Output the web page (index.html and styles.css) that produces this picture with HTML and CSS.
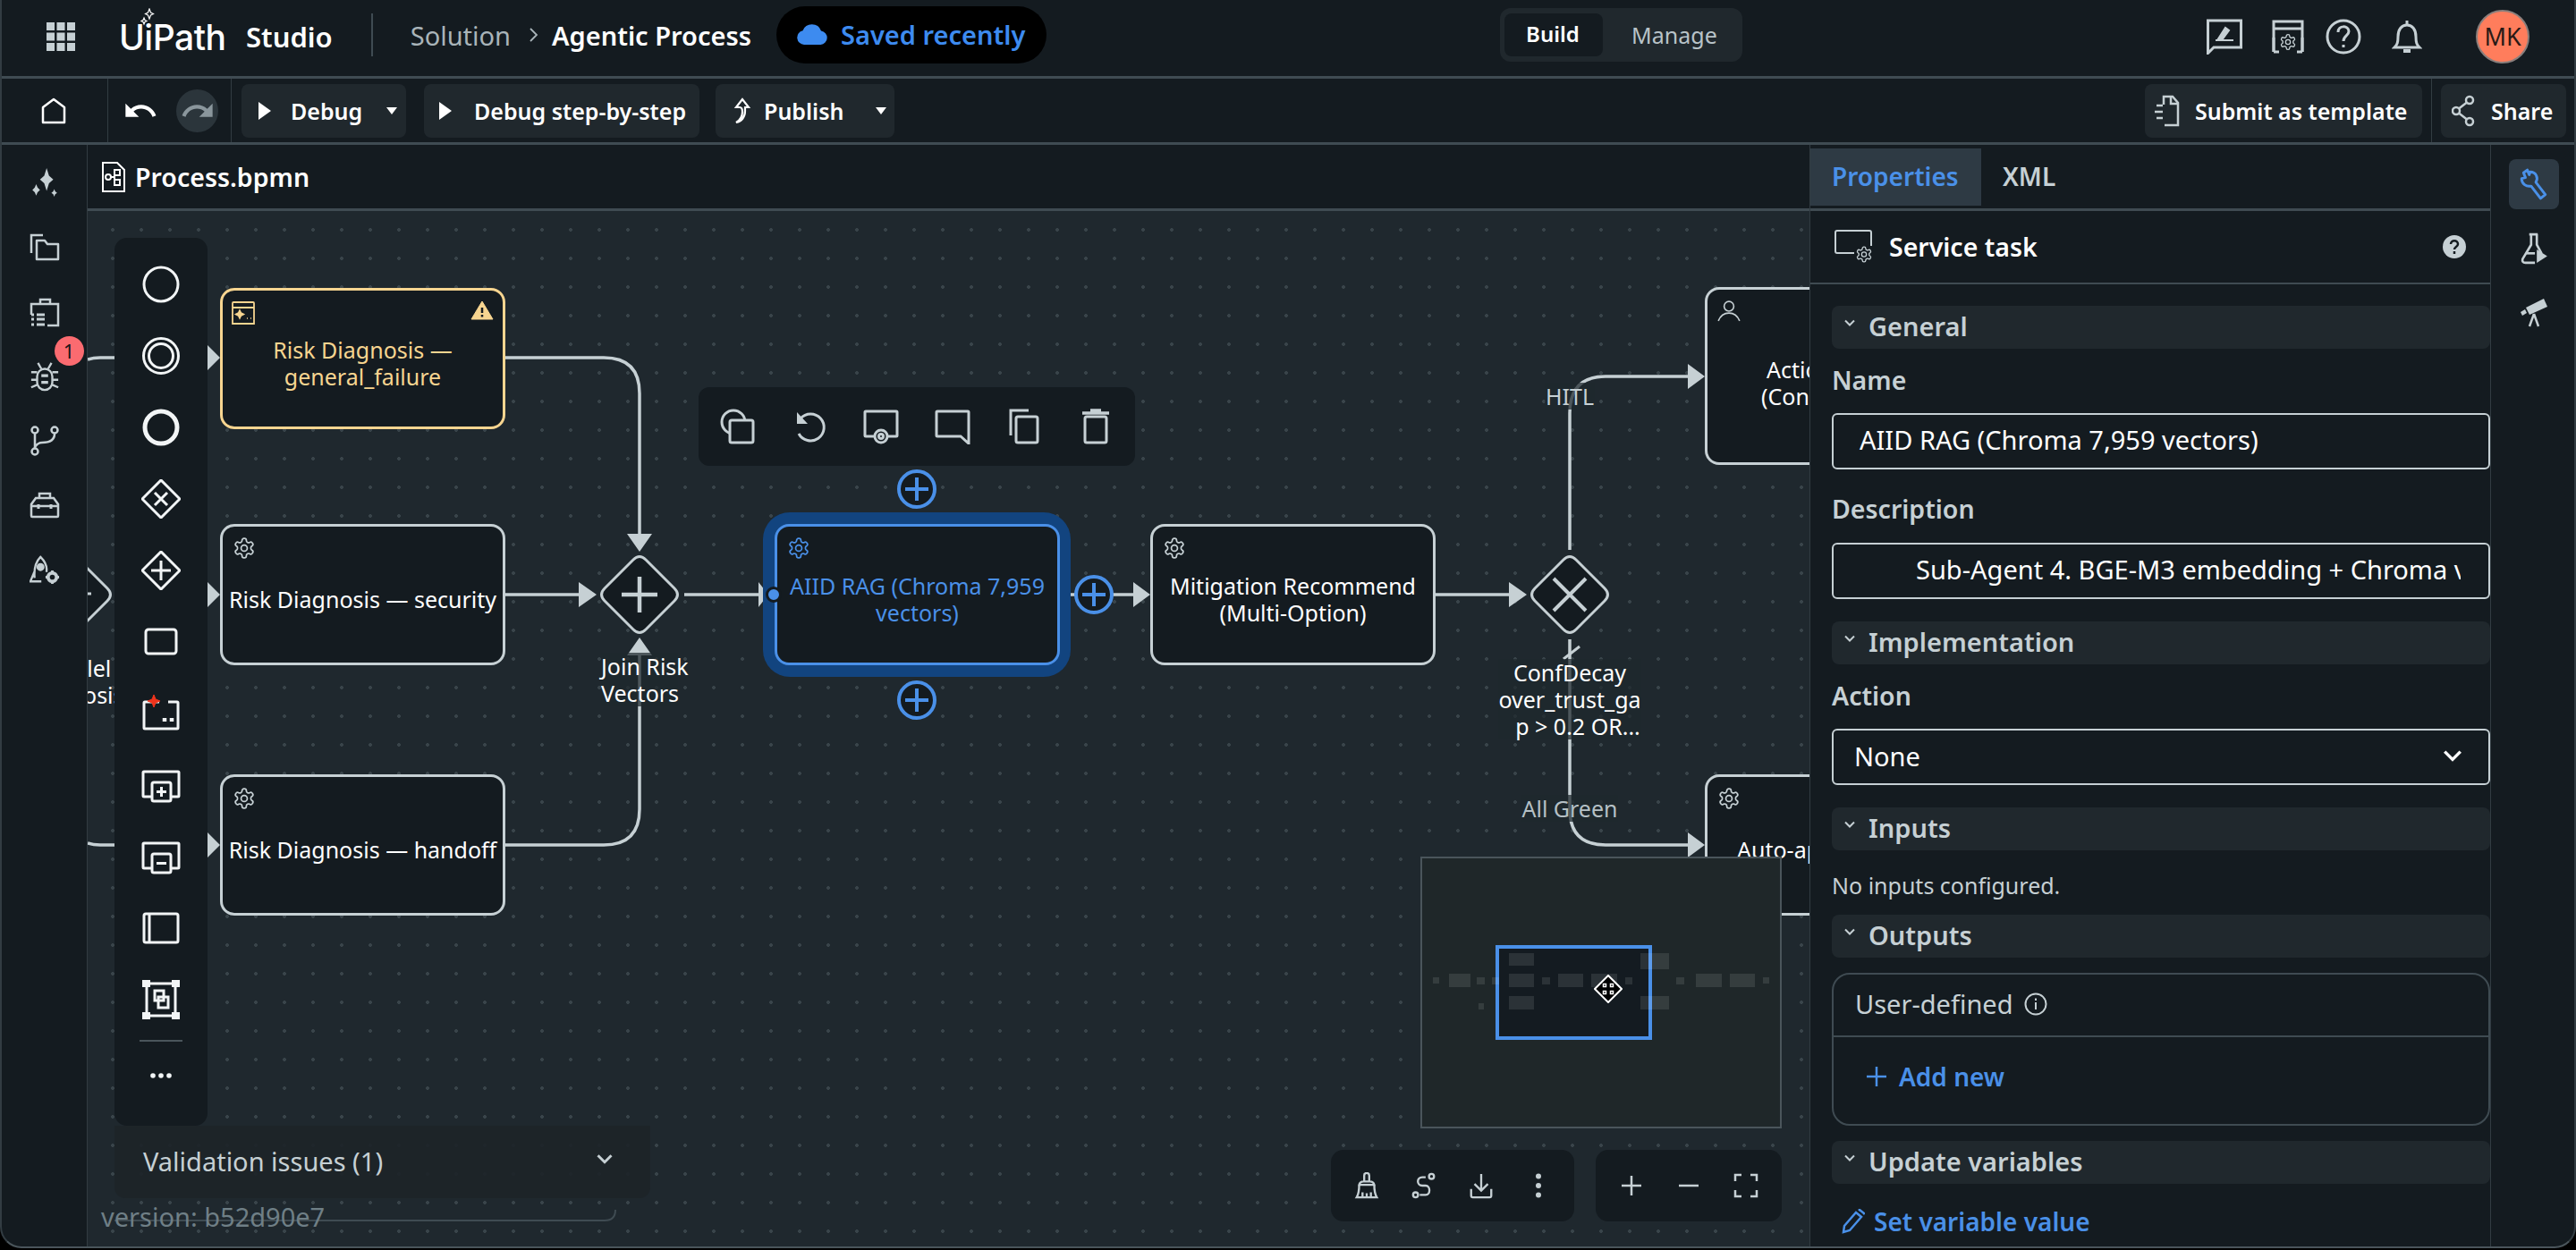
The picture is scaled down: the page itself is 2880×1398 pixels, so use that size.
FILE: index.html
```html
<!DOCTYPE html>
<html lang="en">
<head>
    <meta charset="UTF-8">
    <title>UiPath Studio - Agentic Process</title>
    <link rel="stylesheet" href="styles.css">
</head>
<body>
<svg class="defs">
    <symbol id="gear" viewBox="0 0 24 24"><path fill="none" stroke="currentColor" stroke-width="1.6" d="M12.22 2h-.44a2 2 0 0 0-2 2v.18a2 2 0 0 1-1 1.73l-.43.25a2 2 0 0 1-2 0l-.15-.08a2 2 0 0 0-2.73.73l-.22.38a2 2 0 0 0 .73 2.73l.15.1a2 2 0 0 1 1 1.72v.51a2 2 0 0 1-1 1.74l-.15.09a2 2 0 0 0-.73 2.73l.22.38a2 2 0 0 0 2.73.73l.15-.08a2 2 0 0 1 2 0l.43.25a2 2 0 0 1 1 1.73V20a2 2 0 0 0 2 2h.44a2 2 0 0 0 2-2v-.18a2 2 0 0 1 1-1.73l.43-.25a2 2 0 0 1 2 0l.15.08a2 2 0 0 0 2.73-.73l.22-.39a2 2 0 0 0-.73-2.73l-.15-.08a2 2 0 0 1-1-1.74v-.5a2 2 0 0 1 1-1.74l.15-.09a2 2 0 0 0 .73-2.73l-.22-.38a2 2 0 0 0-2.73-.73l-.15.08a2 2 0 0 1-2 0l-.43-.25a2 2 0 0 1-1-1.73V4a2 2 0 0 0-2-2z"/><circle cx="12" cy="12" r="3.2" fill="none" stroke="currentColor" stroke-width="1.6"/></symbol>
    <symbol id="chev" viewBox="0 0 16 16"><path d="M3 5.5l5 5 5-5" fill="none" stroke="currentColor" stroke-width="2"/></symbol>
    <symbol id="gw" viewBox="-48 -48 96 96"><path d="M-7-39Q0-46 7-39L39-7Q46 0 39 7L7 39Q0 46-7 39L-39 7Q-46 0-39-7Z" fill="#141b20" stroke="#c6d0d4" stroke-width="3"/></symbol>
    <symbol id="addbtn" viewBox="-24 -24 48 48"><circle r="20" fill="#141b20" stroke="#4a90e8" stroke-width="4"/><path d="M-13 0H13M0-13V13" stroke="#4a90e8" stroke-width="4"/></symbol>
</svg>
<div class="app">
    <header class="topbar">
        <svg class="grid-icon" viewBox="0 0 32 32" fill="#c6d0d4"><path d="M0 0h9v9H0zM11.5 0h9v9h-9zM23 0h9v9h-9zM0 11.5h9v9H0zM11.5 11.5h9v9h-9zM23 11.5h9v9h-9zM0 23h9v9H0zM11.5 23h9v9h-9zM23 23h9v9h-9z"/></svg>
        <div class="logo">UiPath
            <svg class="logo-spark" viewBox="0 0 16 20" fill="none" stroke="#fff" stroke-width="1.2"><path d="M10 1l1.5 4 3 1.5-3 1.5L10 12 8.5 8l-3-1.5 3-1.5zM4 11l1 2.5 2 1-2 1L4 18l-1-2.5-2-1 2-1z"/></svg>
        </div>
        <div class="product">Studio</div>
        <div class="top-divider"></div>
        <div class="crumb">Solution</div>
        <svg class="crumb-sep" viewBox="0 0 12 20"><path d="M2 3l7 7-7 7" fill="none" stroke="#a9b4b9" stroke-width="1.8"/></svg>
        <div class="crumb-current">Agentic Process</div>
        <div class="saved-pill">
            <svg class="cloud" viewBox="0 0 34 24" fill="#3d8bf0"><path d="M8 24a8 8 0 0 1-1.5-15.8A11 11 0 0 1 27 8.5 7.8 7.8 0 0 1 26.5 24z"/></svg>
            <span>Saved recently</span>
        </div>
        <div class="mode-toggle">
            <div class="mode mode-active">Build</div>
            <div class="mode">Manage</div>
        </div>
        <div class="top-icons">
            <svg class="i-feedback" viewBox="0 0 40 40" fill="none" stroke="#c6d0d4" stroke-width="3"><path d="M1.5 38.5V2h37v30H8z"/><path d="M10 24h20M12 24l9-14 4 3-8 11" fill="#c6d0d4" stroke-width="2"/></svg>
            <svg class="i-store" viewBox="0 0 38 38" fill="none" stroke="#c6d0d4" stroke-width="3"><path d="M3 36V2h32v34M3 10h32"/><path d="M3 36h6M29 36h6M3 20v16M35 20v16"/><use href="#gear" x="9" y="14" width="20" height="22" color="#c6d0d4"/></svg>
            <svg class="i-help" viewBox="0 0 40 40" fill="none" stroke="#c6d0d4" stroke-width="3"><circle cx="20" cy="20" r="18"/><path d="M14 15c0-8 12-8 12-1 0 5-6 5-6 11"/><path d="M20 29v3"/></svg>
            <svg class="i-bell" viewBox="0 0 34 40" fill="none" stroke="#c6d0d4" stroke-width="3"><path d="M3 32c3-3 4-5 4-12 0-8 4-13 10-13s10 5 10 13c0 7 1 9 4 12z"/><path d="M17 2v5"/><path d="M13 36h8" stroke-width="4"/></svg>
            <div class="avatar">MK</div>
        </div>
    </header>

    <div class="toolbar">
        <div class="home-cell">
            <svg class="i-home" viewBox="0 0 28 30" fill="none" stroke="#fff" stroke-width="2.5" stroke-linejoin="round"><path d="M2 28V11L14 2l12 9v17z"/></svg>
        </div>
        <div class="history-cell">
            <svg class="i-undo" viewBox="0 0 24 24" fill="#fff"><path d="M12.5 8c-2.65 0-5.05.99-6.9 2.6L2 7v9h9l-3.62-3.62c1.39-1.16 3.16-1.88 5.12-1.88 3.54 0 6.55 2.31 7.6 5.5l2.37-.78C21.08 11.03 17.15 8 12.5 8z"/></svg>
            <div class="redo-btn">
                <svg class="i-undo" viewBox="0 0 24 24" fill="#8a969c"><path d="M18.4 10.6C16.55 8.99 14.15 8 11.5 8c-4.65 0-8.58 3.03-9.96 7.22L3.9 16c1.05-3.19 4.05-5.5 7.6-5.5 1.95 0 3.73.72 5.12 1.88L13 16h9V7l-3.6 3.6z"/></svg>
            </div>
        </div>
        <div class="tb-btn btn-debug">
            <svg class="i-play" viewBox="0 0 14 20" fill="#fff"><path d="M0 0l14 10L0 20z"/></svg>
            <span>Debug</span>
            <svg class="i-caret" viewBox="0 0 12 8" fill="#fff"><path d="M0 0h12L6 8z"/></svg>
        </div>
        <div class="tb-btn btn-step">
            <svg class="i-play" viewBox="0 0 14 20" fill="#fff"><path d="M0 0l14 10L0 20z"/></svg>
            <span>Debug step-by-step</span>
        </div>
        <div class="tb-btn btn-publish">
            <svg class="i-publish" viewBox="0 0 22 30" fill="none" stroke="#fff" stroke-width="2.2"><path d="M11 2L4 11h4c2 0 3 2 3 5 0 5-2 9-7 12 6-1 10-6 10-13v-4h4z"/></svg>
            <span>Publish</span>
            <svg class="i-caret" viewBox="0 0 12 8" fill="#fff"><path d="M0 0h12L6 8z"/></svg>
        </div>
        <div class="toolbar-right">
            <div class="tb-btn btn-submit">
                <svg class="i-submit" viewBox="0 0 28 36" fill="none" stroke="#c6d0d4" stroke-width="2.5"><path d="M10 11V2h10l6 7v25H11"/><path d="M2 12h7M0 19h9M2 26h7M18 2v8h8"/></svg>
                <span>Submit as template</span>
            </div>
            <div class="tb-divider"></div>
            <div class="tb-btn btn-share">
                <svg class="i-share" viewBox="0 0 26 36" fill="none" stroke="#c6d0d4" stroke-width="2.5"><circle cx="20" cy="6" r="4"/><circle cx="5" cy="18" r="4"/><circle cx="20" cy="30" r="4"/><path d="M8 15.5l9-7M8 20.5l9 7"/></svg>
                <span>Share</span>
            </div>
        </div>
    </div>

    <div class="workspace">
        <nav class="left-rail">
            <svg class="rail-i" viewBox="0 0 32 32" fill="#c6d0d4"><path d="M18 0l2.5 8 4.5 4-4.500 4L18 24l-2.5-8-4.500-4 4.500-4zM7 17l1.5 3.5L11 23l-2.5 2.5L7 29l-1.5-3.5L3 23l2.5-2.500zM26 22l1 2.500 2 1.500-2 1.500-1 2.500-1-2.500-2-1.500 2-1.500z"/></svg>
            <svg class="rail-i" viewBox="0 0 34 32" fill="none" stroke="#c6d0d4" stroke-width="2.5"><path d="M2 22V2h13"/><path d="M8 29V8h9l3 4h12v17z" stroke-linejoin="round"/></svg>
            <svg class="rail-i" viewBox="0 0 34 34" fill="none" stroke="#c6d0d4" stroke-width="2.5"><path d="M12 8V3h11v5M2 20V8h30v24H20"/><path d="M2 20h3M8 20h9M2 25h3M8 25h9M2 31h3M8 31h9" stroke-width="3"/></svg>
            <div class="rail-bug">
                <svg class="rail-i" viewBox="0 0 34 36" fill="none" stroke="#c6d0d4" stroke-width="2.5"><rect x="8" y="9" width="18" height="25" rx="9"/><path d="M9 2l4 7M25 2l-4 7M1 13h7M33 13h-7M1 22h7M33 22h-7M1 31l7-3M33 31l-7-3"/><path d="M13 17h8M13 25h8" stroke-width="3.5"/></svg>
                <div class="bug-badge">1</div>
            </div>
            <svg class="rail-i" viewBox="0 0 32 34" fill="none" stroke="#c6d0d4" stroke-width="2.5"><circle cx="5" cy="5" r="3.5"/><circle cx="5" cy="29" r="3.5"/><circle cx="27" cy="5" r="3.5"/><path d="M5 9v16M27 9c0 8-6 10-14 10-4 0-6 2-8 5"/></svg>
            <svg class="rail-i" viewBox="0 0 34 30" fill="none" stroke="#c6d0d4" stroke-width="2.5"><path d="M2 27V14l5-7h20l5 7v13q0 1-1 1H3q-1 0-1-1zM2 16h30M11 7V2h12v5"/><path d="M10 14v5M24 14v5" stroke-width="3"/></svg>
            <svg class="rail-i" viewBox="0 0 36 36" fill="none" stroke="#c6d0d4" stroke-width="2.5"><path d="M6 28c-1-12 1-19 7-25 6 6 8 13 7 18M6 20L1 32h13"/><circle cx="13" cy="15" r="3.5" fill="#c6d0d4"/><circle cx="27" cy="27" r="5" stroke-width="4"/><path d="M27 19v3M27 32v3M19 27h3M32 27h3" stroke-width="3"/></svg>
        </nav>

        <main class="main">
            <div class="file-tab">
                <svg class="i-file" viewBox="0 0 26 34" fill="none" stroke="#fff" stroke-width="2"><path d="M1 33V1h16l8 8v24z"/><circle cx="7" cy="17" r="3"/><rect x="14" y="9" width="6" height="6"/><rect x="14" y="20" width="6" height="6"/><path d="M10 17h4M14 12v11"/></svg>
                <span>Process.bpmn</span>
            </div>
            <div class="canvas">
                <svg class="edges" viewBox="98 236 1925 1160" fill="none" stroke="#c6d0d4" stroke-width="3.5">
                    <path d="M98 402Q104 400 112 400H232M98 943Q104 945 112 945H232"/>
                    <path d="M565 400H675Q715 400 715 440V600"/>
                    <path d="M565 665H650"/>
                    <path d="M565 945H675Q715 945 715 905V733"/>
                    <path d="M765 665H850"/>
                    <path d="M1197 665H1270"/>
                    <path d="M1604 665H1690"/>
                    <path d="M1755 615V462Q1755 421 1795 421H1890"/>
                    <path d="M1755 715V905Q1755 945 1795 945H1890"/>
                    <path d="M1748 737L1766 723" stroke-width="3"/>
                    <path d="M128 1365H676Q688 1365 688 1353" stroke="#3f4b52" stroke-width="2"/>
                    <g fill="#c6d0d4" stroke="none">
                        <path d="M232 386l14 14-14 14zM232 651l14 14-14 14zM232 931l14 14-14 14z"/>
                        <path d="M701 597h28l-14 20zM701 733h28l-14-20z"/>
                        <path d="M647 651l20 14-20 14zM848 651l11 14-11 14zM1267 651l19 14-19 14zM1687 651l20 14-20 14z"/>
                        <path d="M1887 407l19 14-19 14zM1887 931l19 14-19 14z"/>
                    </g>
                    <use href="#gw" x="33" y="617" width="96" height="96"/>
                    <use href="#gw" x="667" y="617" width="96" height="96"/>
                    <use href="#gw" x="1707" y="617" width="96" height="96"/>
                    <path d="M715 645V685M695 665H735" stroke-width="4.5"/>
                    <path d="M1737 647L1773 683M1773 647L1737 683" stroke-width="4"/>
                    <path d="M98 664h4" stroke-width="3"/>
                </svg>

                <div class="label label-left">Parallel<br>Diagnosis</div>
                <div class="label label-join">Join Risk<br>Vectors</div>
                <div class="label label-conf">ConfDecay<br>over_trust_ga<br><span class="label-indent">p &gt; 0.2 OR...</span></div>
                <div class="label label-hitl">HITL</div>
                <div class="label label-green">All Green</div>

                <div class="node node-warn n-general">
                    <svg class="node-i" viewBox="0 0 28 28" fill="none" stroke="#f7d590" stroke-width="1.8"><path d="M2 8V3q0-1 1-1h22q1 0 1 1v5M2 8h24v18H2z"/><path d="M10 11l1.5 3 3 1.5-3 1.5-1.5 3-1.5-3-3-1.5 3-1.5zM18 20h1M22 20h1" fill="#f7d590" stroke-width="1.5"/></svg>
                    <svg class="node-warn-i" viewBox="0 0 26 22"><path d="M13 1l12 20H1z" fill="#f7d590" stroke="#f7d590" stroke-linejoin="round"/><path d="M13 8v6M13 16v2.5" stroke="#141b20" stroke-width="2.5"/></svg>
                    <span>Risk Diagnosis —<br>general_failure</span>
                </div>
                <div class="node n-security"><svg class="node-i"><use href="#gear"/></svg>Risk Diagnosis — security</div>
                <div class="node n-handoff"><svg class="node-i"><use href="#gear"/></svg>Risk Diagnosis — handoff</div>
                <div class="node-halo n-halo"></div>
                <div class="node node-selected n-aiid"><svg class="node-i"><use href="#gear"/></svg><span>AIID RAG (Chroma 7,959<br>vectors)</span></div>
                <div class="node n-mitigation"><svg class="node-i"><use href="#gear"/></svg><span>Mitigation Recommend<br>(Multi-Option)</span></div>
                <div class="node node-cut n-action">
                    <svg class="node-i" viewBox="0 0 24 24" fill="none" stroke="#c6d0d4" stroke-width="1.5"><circle cx="12" cy="7" r="5"/><path d="M1 22c3-7 7-8 11-8s8 1 11 8"/></svg>
                    <span class="cut-text cut-action">Action<br><span class="cut-second">(Con</span></span>
                </div>
                <div class="node node-cut n-auto"><svg class="node-i"><use href="#gear"/></svg><span class="cut-text cut-auto">Auto-ap</span></div>

                <div class="port"></div>
                <svg class="add-btn add-top"><use href="#addbtn"/></svg>
                <svg class="add-btn add-right"><use href="#addbtn"/></svg>
                <svg class="add-btn add-bottom"><use href="#addbtn"/></svg>

                <div class="context-bar">
                    <svg class="ctx-i" viewBox="0 0 40 40"><circle cx="15" cy="15" r="13"/><rect x="11" y="13" width="26" height="25" rx="2" fill="#141b20"/></svg>
                    <svg class="ctx-i" viewBox="0 0 40 40"><path d="M10 11a15 15 0 1 1-2 17"/><path d="M6 4v13h12z" fill="#c6d0d4" stroke="none"/></svg>
                    <svg class="ctx-i" viewBox="0 0 40 40"><path d="M14 31H3q-1 0-1-1V4q0-1 1-1h34q1 0 1 1v26q0 1-1 1H27"/><circle cx="20" cy="31" r="7"/><circle cx="20" cy="31" r="2.5"/></svg>
                    <svg class="ctx-i" viewBox="0 0 40 40"><path d="M3 3h34q1 0 1 1v35l-9-8H3q-1 0-1-1V4q0-1 1-1z"/></svg>
                    <svg class="ctx-i" viewBox="0 0 40 40"><path d="M5 30V2h20"/><rect x="11" y="9" width="24" height="29" rx="2"/></svg>
                    <svg class="ctx-i" viewBox="0 0 40 40"><rect x="8" y="9" width="24" height="29" rx="2"/><path d="M5 5h30M14 2h12" stroke-width="3.5"/></svg>
                </div>

                <aside class="palette">
                    <svg class="pal-i" viewBox="0 0 44 44"><circle cx="22" cy="22" r="19"/></svg>
                    <svg class="pal-i" viewBox="0 0 44 44"><circle cx="22" cy="22" r="19.5"/><circle cx="22" cy="22" r="13.5"/></svg>
                    <svg class="pal-i pal-thick" viewBox="0 0 44 44"><circle cx="22" cy="22" r="18"/></svg>
                    <svg class="pal-i" viewBox="0 0 44 44"><path d="M22 1l21 21-21 21L1 22z"/><path d="M15 15l14 14M29 15L15 29"/></svg>
                    <svg class="pal-i" viewBox="0 0 44 44"><path d="M22 1l21 21-21 21L1 22z"/><path d="M22 11v22M11 22h22"/></svg>
                    <svg class="pal-i" viewBox="0 0 44 44"><rect x="5" y="8" width="34" height="27" rx="3"/></svg>
                    <svg class="pal-i" viewBox="0 0 44 44"><path d="M20 9H4q-1 0-1 1v28q0 1 1 1h36q1 0 1-1V10q0-1-1-1H30"/><path d="M14 1l2 5 5 2-5 2-2 5-2-5-5-2 5-2z" fill="#f0341c" stroke="#f0341c" stroke-width="1"/><path d="M26 27v4M34 27v4" stroke-width="4.5"/></svg>
                    <svg class="pal-i" viewBox="0 0 44 44"><path d="M11 35H3q-1 0-1-1V8q0-1 1-1h38q1 0 1 1v26q0 1-1 1h-8"/><rect x="12" y="19" width="21" height="21" rx="2"/><path d="M22.5 24v11M17 29.5h11"/></svg>
                    <svg class="pal-i" viewBox="0 0 44 44"><path d="M11 35H3q-1 0-1-1V8q0-1 1-1h38q1 0 1 1v26q0 1-1 1h-8"/><rect x="12" y="19" width="21" height="21" rx="2"/><path d="M17 29.5h11"/></svg>
                    <svg class="pal-i" viewBox="0 0 44 44"><rect x="3" y="6" width="38" height="32" rx="2"/><path d="M9 6v32"/></svg>
                    <svg class="pal-i" viewBox="0 0 44 44"><rect x="6" y="4" width="32" height="36"/><path d="M1 0h9v8H1zM34 0h9v8h-9zM1 36h9v8H1zM34 36h9v8h-9z" fill="#f2f5f6" stroke="none"/><rect x="15" y="12" width="10" height="11"/><rect x="19" y="19" width="11" height="12"/></svg>
                    <div class="pal-sep"></div>
                    <svg class="pal-more" viewBox="0 0 24 6" fill="#f2f5f6"><circle cx="3" cy="3" r="2.8"/><circle cx="12" cy="3" r="2.8"/><circle cx="21" cy="3" r="2.8"/></svg>
                </aside>

                <div class="validation">
                    <span>Validation issues (1)</span>
                    <svg class="val-chev"><use href="#chev"/></svg>
                </div>
                <div class="version">version: b52d90e7</div>

                <div class="minimap">
                    <svg class="minimap-svg" viewBox="1588 958 404 304">
                        <rect x="1674" y="1059" width="171" height="102" fill="#141b21" stroke="#4a90e8" stroke-width="4"/>
                        <g fill="#fff" fill-opacity=".1">
                            <rect x="1602" y="1093" width="7" height="7"/><rect x="1620" y="1089" width="24" height="15"/>
                            <rect x="1651" y="1093" width="9" height="8"/><rect x="1668" y="1093" width="8" height="8"/>
                            <rect x="1687" y="1089" width="28" height="15"/><rect x="1724" y="1093" width="9" height="8"/>
                            <rect x="1742" y="1089" width="28" height="15"/><rect x="1779" y="1089" width="29" height="15"/>
                            <rect x="1817" y="1093" width="8" height="8"/><rect x="1874" y="1093" width="9" height="8"/>
                            <rect x="1896" y="1089" width="29" height="15"/><rect x="1934" y="1089" width="28" height="15"/>
                            <rect x="1971" y="1093" width="7" height="7"/>
                            <rect x="1687" y="1066" width="28" height="14"/><rect x="1834" y="1066" width="32" height="18"/>
                            <rect x="1687" y="1114" width="28" height="15"/><rect x="1834" y="1114" width="32" height="15"/>
                            <rect x="1653" y="1122" width="6" height="7"/>
                        </g>
                    </svg>
                    <svg class="move-cursor" viewBox="0 0 32 32"><path d="M16 1l15 15-15 15L1 16z" fill="#000" stroke="#fff" stroke-width="2"/><path d="M10.5 10.5h3v3h-3zM18.5 10.5h3v3h-3zM10.5 18.5h3v3h-3zM18.5 18.5h3v3h-3z" fill="#000" stroke="#fff" stroke-width="1.5"/></svg>
                </div>

                <div class="float-tools tools-left">
                    <svg class="tool-i" viewBox="0 0 28 32"><path d="M11 11V4a3 3 0 0 1 6 0v7M5 15q1-4 5-4h8q4 0 5 4zM5 15q0 10-3 15h24q-3-5-3-15M9 30v-6M14 30v-5M19 30v-6"/></svg>
                    <svg class="tool-i" viewBox="0 0 28 32"><circle cx="23" cy="5" r="3"/><circle cx="4" cy="27" r="3"/><path d="M16 6h-4c-7 0-7 10 0 10h4c6 0 6 11 0 11H9"/></svg>
                    <svg class="tool-i" viewBox="0 0 28 32"><path d="M14 2v20M6 14l8 8 8-8M2 20v8q0 2 2 2h20q2 0 2-2v-8"/></svg>
                    <svg class="tool-i tool-dots" viewBox="0 0 28 28"><circle cx="14" cy="3.5" r="3"/><circle cx="14" cy="14" r="3"/><circle cx="14" cy="24.5" r="3"/></svg>
                </div>
                <div class="float-tools tools-right">
                    <svg class="tool-i" viewBox="0 0 28 28"><path d="M14 3v22M3 14h22"/></svg>
                    <svg class="tool-i" viewBox="0 0 28 28"><path d="M3 14h22"/></svg>
                    <svg class="tool-i" viewBox="0 0 28 28"><path d="M2 9V2h7M19 2h7v7M26 19v7h-7M9 26H2v-7"/></svg>
                </div>
            </div>
        </main>

        <section class="props">
            <div class="props-tabs">
                <div class="props-tab props-tab-active">Properties</div>
                <div class="props-tab">XML</div>
            </div>
            <div class="props-head">
                <svg class="i-service" viewBox="0 0 44 38" fill="none" stroke="#c6d0d4" stroke-width="2"><path d="M22 26H3q-2 0-2-2V3q0-2 2-2h36q2 0 2 2v15"/><use href="#gear" x="23" y="17" width="20" height="21" color="#c6d0d4"/></svg>
                <span class="props-title">Service task</span>
                <svg class="i-qmark" viewBox="0 0 26 26"><circle cx="13" cy="13" r="13" fill="#c6d0d4"/><path d="M9 10c0-5 8-5 8 0 0 3-4 3-4 6" fill="none" stroke="#141b20" stroke-width="2.5"/><path d="M13 18v3" stroke="#141b20" stroke-width="2.5"/></svg>
            </div>
            <div class="props-body">
                <div class="prop-section"><svg class="sec-chev"><use href="#chev"/></svg>General</div>
                <div class="prop-label">Name</div>
                <div class="prop-input">AIID RAG (Chroma 7,959 vectors)</div>
                <div class="prop-label label-desc">Description</div>
                <div class="prop-input input-desc"><span>Sub-Agent 4. BGE-M3 embedding + Chroma vector</span></div>
                <div class="prop-section"><svg class="sec-chev"><use href="#chev"/></svg>Implementation</div>
                <div class="prop-label">Action</div>
                <div class="prop-input input-select">None<svg class="select-chev"><use href="#chev"/></svg></div>
                <div class="prop-section"><svg class="sec-chev"><use href="#chev"/></svg>Inputs</div>
                <div class="prop-note">No inputs configured.</div>
                <div class="prop-section section-tight"><svg class="sec-chev"><use href="#chev"/></svg>Outputs</div>
                <div class="outputs-box">
                    <div class="outputs-head">User-defined
                        <svg class="i-info" viewBox="0 0 26 26" fill="none" stroke="#c6d0d4" stroke-width="2"><circle cx="13" cy="13" r="11.5"/><path d="M13 11v8M13 6.5v2.5"/></svg>
                    </div>
                    <div class="add-new">
                        <svg class="i-plus" viewBox="0 0 22 22"><path d="M11 0v22M0 11h22" stroke="#4a90e8" stroke-width="2.5"/></svg>
                        Add new
                    </div>
                </div>
                <div class="prop-section section-tight2"><svg class="sec-chev"><use href="#chev"/></svg>Update variables</div>
                <div class="set-var">
                    <svg class="i-pencil" viewBox="0 0 26 28" fill="none" stroke="#4a90e8" stroke-width="2.5"><path d="M2 26l1-7L16 4l6 5L9 24zM19 2l1-1 5 4-1 1"/></svg>
                    Set variable value
                </div>
            </div>
        </section>

        <nav class="right-rail">
            <div class="rail-active">
                <svg class="rail-r-i" viewBox="0 0 30 34" fill="none" stroke="#4a90e8" stroke-width="2.8" stroke-linejoin="round"><path d="M8 2L4 5l2 5-4 1c0 6 5 9 10 8l10 13 5-4-10-13c3-5 0-11-6-11l-1 3-2-5z"/></svg>
            </div>
            <svg class="rail-r-i" viewBox="0 0 30 34" fill="none" stroke="#c6d0d4" stroke-width="2.5"><path d="M10 2h9M12 2v11L3 28q-1 4 3 4h10M18 2v11l5 9"/><path d="M7 22h9"/><path d="M18 18l11 7-11 7z" fill="#c6d0d4" stroke="none"/></svg>
            <svg class="rail-r-i rail-scope" viewBox="0 0 34 34" fill="#c6d0d4"><path d="M8 12L28 2l4 9-20 9z"/><path d="M2 17l5-3 2 4-5 3z"/><path d="M17 19l-5 14M17 19l5 14" fill="none" stroke="#c6d0d4" stroke-width="2.5"/></svg>
        </nav>
    </div>
</div>
</body>
</html>
```

FILE: styles.css
```css
* {
    box-sizing: border-box;
}
html, body {
    margin: 0;
    padding: 0;
    background-color: #000;
    font-family: "Noto Sans", sans-serif;
    color: #c6d0d4;
}
.defs {
    position: absolute;
    width: 0;
    height: 0;
}
.app {
    width: 2880px;
    height: 1396px;
    background-color: #141b20;
    border-left: 2px solid #323c42;
    border-right: 2px solid #323c42;
    border-bottom: 2px solid #4a555b;
    border-radius: 0 0 24px 24px;
    overflow: hidden;
    display: flex;
    flex-direction: column;
}

/* top bar */
.topbar {
    height: 88px;
    flex-shrink: 0;
    border-bottom: 3px solid #3f4b52;
    display: flex;
    align-items: center;
    padding-left: 50px;
    padding-bottom: 7px;
}
.grid-icon {
    width: 32px;
    height: 32px;
    margin-top: 4px;
}
.logo {
    position: relative;
    margin-left: 49px;
    margin-top: 4px;
    width: 125px;
    font-family: Inter, sans-serif;
    font-size: 39px;
    font-weight: 500;
    color: #fff;
    letter-spacing: -0.5px;
}
.logo-spark {
    position: absolute;
    left: 24px;
    top: -9px;
    width: 16px;
    height: 20px;
}
.product {
    margin-left: 17px;
    margin-top: 4px;
    font-size: 31px;
    font-weight: 600;
    color: #fff;
}
.top-divider {
    width: 2px;
    height: 48px;
    margin-left: 43px;
    background-color: #3f4b52;
}
.crumb {
    margin-left: 42px;
    font-size: 29px;
    color: #a9b4b9;
}
.crumb-sep {
    width: 12px;
    height: 20px;
    margin-left: 20px;
}
.crumb-current {
    margin-left: 14px;
    font-size: 29px;
    font-weight: 600;
    color: #fff;
}
.saved-pill {
    margin-left: 28px;
    width: 302px;
    height: 64px;
    background-color: #000;
    border-radius: 32px;
    display: flex;
    align-items: center;
    padding-left: 23px;
    padding-bottom: 2px;
    font-size: 29px;
    font-weight: 600;
    color: #3d8bf0;
}
.cloud {
    width: 34px;
    height: 24px;
    margin-right: 15px;
}
.mode-toggle {
    margin-left: 507px;
    width: 271px;
    height: 60px;
    background-color: #20282d;
    border-radius: 12px;
    display: flex;
    align-items: center;
    padding-left: 5px;
    font-size: 25px;
}
.mode {
    width: 155px;
    padding-left: 32px;
    color: #b8c3c8;
}
.mode-active {
    width: 110px;
    height: 48px;
    padding-left: 24px;
    line-height: 46px;
    border-radius: 8px;
    background-color: #141b20;
    color: #fff;
    font-size: 24px;
    font-weight: 600;
}
.top-icons {
    margin-left: auto;
    margin-top: 4px;
    display: flex;
    align-items: center;
    padding-right: 50px;
}
.i-feedback { width: 40px; height: 40px; }
.i-store { width: 38px; height: 38px; margin-left: 32px; }
.i-help { width: 40px; height: 40px; margin-left: 23px; }
.i-bell { width: 34px; height: 40px; margin-left: 34px; }
.avatar {
    width: 60px;
    height: 60px;
    margin-left: 60px;
    border-radius: 50%;
    border: 2px solid #8a7f7c;
    background-color: #ff7d5c;
    color: #2a1a16;
    font-size: 27px;
    text-align: center;
    line-height: 56px;
}

/* second toolbar */
.toolbar {
    height: 74px;
    flex-shrink: 0;
    border-bottom: 3px solid #3f4b52;
    display: flex;
    align-items: center;
}
.home-cell {
    width: 119px;
    height: 100%;
    border-right: 1px solid #323c42;
    padding-left: 44px;
    display: flex;
    align-items: center;
}
.i-home { width: 28px; height: 30px; }
.history-cell {
    width: 138px;
    height: 100%;
    border-right: 1px solid #323c42;
    padding-left: 16px;
    display: flex;
    align-items: center;
}
.i-undo { width: 40px; height: 40px; }
.redo-btn {
    width: 47px;
    height: 48px;
    margin-left: 20px;
    border-radius: 50%;
    background-color: #2b353b;
    display: flex;
    align-items: center;
    justify-content: center;
}
.tb-btn {
    height: 60px;
    background-color: #20282d;
    border-radius: 8px;
    display: flex;
    align-items: center;
    font-size: 25px;
    font-weight: 600;
    color: #fff;
}
.i-play { width: 14px; height: 20px; }
.i-caret { width: 12px; height: 8px; }
.btn-debug { width: 184px; margin-left: 11px; padding-left: 19px; }
.btn-debug span { margin-left: 22px; }
.btn-debug .i-caret { margin-left: 27px; }
.btn-step { width: 308px; margin-left: 20px; padding-left: 17px; }
.btn-step span { margin-left: 25px; }
.btn-publish { width: 200px; margin-left: 18px; padding-left: 19px; }
.btn-publish span { margin-left: 13px; }
.btn-publish .i-caret { margin-left: 36px; }
.i-publish { width: 22px; height: 30px; }
.toolbar-right {
    margin-left: auto;
    height: 100%;
    display: flex;
    align-items: center;
    padding-right: 9px;
}
.btn-submit { width: 310px; padding-left: 11px; }
.btn-submit span { margin-left: 17px; }
.i-submit { width: 28px; height: 36px; }
.tb-divider {
    width: 1px;
    height: 100%;
    margin: 0 10px;
    background-color: #323c42;
}
.btn-share { width: 140px; padding-left: 12px; }
.btn-share span { margin-left: 18px; }
.i-share { width: 26px; height: 36px; }

/* main area */
.workspace {
    flex: 1;
    display: flex;
    min-height: 0;
}
.left-rail {
    width: 96px;
    flex-shrink: 0;
    border-right: 1px solid #323c42;
    display: flex;
    flex-direction: column;
    align-items: center;
    padding-top: 26px;
    gap: 38px;
}
.rail-i {
    display: block;
    width: 34px;
    height: 34px;
}
.rail-bug {
    position: relative;
}
.bug-badge {
    position: absolute;
    left: 28px;
    top: -28px;
    width: 33px;
    height: 33px;
    border-radius: 50%;
    background-color: #fb6b70;
    color: #1c1518;
    font-size: 22px;
    line-height: 32px;
    text-align: center;
}
.main {
    width: 1925px;
    flex-shrink: 0;
    display: flex;
    flex-direction: column;
}
.file-tab {
    height: 74px;
    flex-shrink: 0;
    border-bottom: 3px solid #3f4b52;
    display: flex;
    align-items: center;
    padding-left: 16px;
    font-size: 28.5px;
    font-weight: 600;
    color: #fff;
}
.i-file {
    width: 26px;
    height: 34px;
    margin-right: 11px;
}

/* canvas */
.canvas {
    position: relative;
    flex: 1;
    overflow: hidden;
    background-color: #1f282e;
    background-image: radial-gradient(circle, #39444a 1.6px, transparent 2.2px);
    background-size: 32px 32px;
    background-position: 12px 5px;
}
.edges {
    position: absolute;
    left: 0;
    top: 0;
    width: 1925px;
    height: 1160px;
}
.node {
    position: absolute;
    width: 319px;
    height: 158px;
    padding-top: 10px;
    background-color: #141b20;
    border: 3px solid #c6d0d4;
    border-radius: 16px;
    display: flex;
    align-items: center;
    justify-content: center;
    text-align: center;
    font-size: 25px;
    line-height: 30px;
    color: #fff;
    white-space: nowrap;
}
.node-i {
    position: absolute;
    left: 11px;
    top: 11px;
    width: 26px;
    height: 26px;
    color: #c6d0d4;
}
.node-warn {
    border-color: #f7d590;
    color: #f7d590;
}
.node-warn-i {
    position: absolute;
    right: 10px;
    top: 11px;
    width: 26px;
    height: 22px;
}
.node-warn .node-i { left: 9px; width: 28px; height: 28px; }
.node-selected {
    border-color: #4a90e8;
    color: #4a90e8;
}
.node-selected .node-i { color: #4a90e8; }
.node-halo {
    position: absolute;
    background-color: #12447f;
    border-radius: 30px;
}
.cut-text {
    position: absolute;
    display: block;
    text-align: left;
}
.cut-action { left: 66px; top: 74px; }
.cut-second { margin-left: -6px; }
.cut-auto { left: 33px; top: 66px; }
.n-general { left: 148px; top: 86px; }
.n-security { left: 148px; top: 350px; }
.n-handoff { left: 148px; top: 630px; }
.n-halo { left: 755px; top: 337px; width: 344px; height: 184px; }
.n-aiid { left: 768px; top: 350px; }
.n-mitigation { left: 1188px; top: 350px; }
.n-action { left: 1808px; top: 85px; height: 199px; }
.n-auto { left: 1808px; top: 630px; }
.label {
    position: absolute;
    text-align: center;
    font-size: 25px;
    line-height: 30px;
    color: #fff;
    white-space: nowrap;
    background-color: rgba(31, 40, 46, 0.72);
}
.label-left { left: -117px; width: 200px; top: 496px; background: none; }
.label-join { left: 574px; width: 86px; top: 494px; }
.label-conf { left: 1577px; width: 160px; top: 501px; }
.label-indent { display: inline-block; margin-left: 18px; }
.label-hitl { left: 1629px; width: 56px; top: 192px; color: #c6d0d4; }
.label-green { left: 1603px; width: 108px; top: 653px; color: #b5c0c5; }
.port {
    position: absolute;
    left: 758px;
    top: 420px;
    width: 18px;
    height: 18px;
    border-radius: 50%;
    background-color: #4a90e8;
    border: 3px solid #141b20;
}
.add-btn {
    position: absolute;
    width: 48px;
    height: 48px;
}
.add-top { left: 903px; top: 287px; }
.add-right { left: 1101px; top: 405px; }
.add-bottom { left: 903px; top: 523px; }
.context-bar {
    position: absolute;
    left: 683px;
    top: 197px;
    width: 488px;
    height: 88px;
    background-color: #141b20;
    border-radius: 12px;
    display: flex;
    align-items: center;
    padding-left: 24px;
    gap: 40px;
}
.ctx-i {
    width: 40px;
    height: 40px;
    fill: none;
    stroke: #c6d0d4;
    stroke-width: 3;
}
.palette {
    position: absolute;
    left: 30px;
    top: 30px;
    width: 104px;
    height: 993px;
    background-color: #141b20;
    border-radius: 14px;
    display: flex;
    flex-direction: column;
    align-items: center;
    padding-top: 30px;
    gap: 36px;
}
.pal-i {
    flex-shrink: 0;
    width: 44px;
    height: 44px;
    fill: none;
    stroke: #f2f5f6;
    stroke-width: 3;
}
.pal-thick { stroke-width: 5; }
.pal-sep {
    flex-shrink: 0;
    width: 48px;
    height: 2px;
    margin-top: -13px;
    background-color: #4a555b;
}
.pal-more {
    flex-shrink: 0;
    width: 24px;
    height: 6px;
    margin-top: -1px;
}
.validation {
    position: absolute;
    left: 30px;
    top: 1023px;
    width: 599px;
    height: 81px;
    background-color: rgba(29, 36, 40, 0.92);
    border-radius: 0 0 12px 12px;
    display: flex;
    align-items: center;
    justify-content: space-between;
    padding: 0 32px 2px;
    font-size: 29px;
    color: #c6d0d4;
}
.val-chev {
    width: 24px;
    height: 24px;
    margin-bottom: 6px;
    margin-right: 7px;
    color: #c6d0d4;
}
.version {
    position: absolute;
    left: 15px;
    top: 1105px;
    font-size: 29px;
    color: #6f7f86;
}
.minimap {
    position: absolute;
    left: 1490px;
    top: 722px;
    width: 404px;
    height: 304px;
    background-color: #1f2729;
    border: 2px solid #4a555b;
}
.minimap-svg {
    position: absolute;
    left: -2px;
    top: -2px;
    width: 404px;
    height: 304px;
}
.move-cursor {
    position: absolute;
    left: 192px;
    top: 130px;
    width: 32px;
    height: 32px;
}
.float-tools {
    position: absolute;
    top: 1050px;
    height: 80px;
    background-color: #141b20;
    border-radius: 14px;
    display: flex;
    align-items: center;
    padding-left: 26px;
    gap: 36px;
}
.tools-left { left: 1390px; width: 272px; }
.tools-right { left: 1686px; width: 208px; }
.tool-i {
    width: 28px;
    height: 30px;
    fill: none;
    stroke: #c6d0d4;
    stroke-width: 2.5;
}
.tool-dots {
    fill: #c6d0d4;
    stroke: none;
}

/* properties panel */
.props {
    width: 762px;
    flex-shrink: 0;
    border-left: 1px solid #323c42;
    border-right: 1px solid #323c42;
    display: flex;
    flex-direction: column;
}
.props-tabs {
    height: 74px;
    flex-shrink: 0;
    border-bottom: 3px solid #3f4b52;
    display: flex;
    align-items: flex-start;
    padding-top: 4px;
    font-size: 28px;
    font-weight: 600;
}
.props-tab {
    height: 64px;
    padding: 0 24px;
    line-height: 62px;
}
.props-tab-active {
    width: 191px;
    background-color: #2e3a44;
    color: #4a90e8;
}
.props-head {
    height: 82px;
    flex-shrink: 0;
    border-bottom: 2px solid #3f4b52;
    display: flex;
    align-items: center;
    padding: 0 27px;
}
.i-service { width: 44px; height: 38px; }
.props-title {
    margin-left: 17px;
    font-size: 28.5px;
    font-weight: 600;
    color: #fff;
}
.i-qmark {
    width: 26px;
    height: 26px;
    margin-left: auto;
}
.props-body {
    padding: 0 0 0 24px;
}
.prop-section {
    height: 48px;
    margin-top: 25px;
    padding-bottom: 4px;
    background-color: #20282d;
    border-radius: 8px;
    display: flex;
    align-items: center;
    font-size: 29px;
    font-weight: 600;
    color: #c6d0d4;
}
.prop-section:first-child { margin-top: 24px; }
.section-tight { margin-top: 14px; }
.section-tight2 { margin-top: 17px; }
.sec-chev {
    width: 16px;
    height: 16px;
    margin: 0 13px 6px 12px;
    color: #c6d0d4;
}
.prop-label {
    height: 34px;
    margin-top: 19px;
    margin-bottom: 19px;
    font-size: 28.5px;
    font-weight: 600;
    line-height: 32px;
    color: #c6d0d4;
}
.label-desc { margin-top: 28px; margin-bottom: 20px; }
.prop-input {
    height: 63px;
    border: 2px solid #c6d0d4;
    border-radius: 6px;
    display: flex;
    align-items: center;
    padding-left: 29px;
    padding-bottom: 5px;
    font-size: 29px;
    color: #fff;
    white-space: nowrap;
    overflow: hidden;
}
.input-desc {
    padding: 0 31px 5px 92px;
}
.input-desc span {
    display: block;
    overflow: hidden;
}
.input-select {
    justify-content: space-between;
    padding: 0 26px 3px 23px;
}
.select-chev {
    width: 28px;
    height: 28px;
    color: #fff;
}
.prop-note {
    height: 34px;
    margin-top: 24px;
    font-size: 25px;
    line-height: 31px;
    color: #c6d0d4;
}
.outputs-box {
    height: 171px;
    margin-top: 17px;
    border: 2px solid #3f4b52;
    border-radius: 20px;
}
.outputs-head {
    height: 70px;
    border-bottom: 2px solid #3f4b52;
    display: flex;
    align-items: center;
    padding-left: 24px;
    padding-bottom: 3px;
    font-size: 29px;
    color: #c6d0d4;
}
.i-info {
    width: 26px;
    height: 26px;
    margin-left: 12px;
}
.add-new {
    height: 92px;
    display: flex;
    align-items: center;
    padding-left: 37px;
    padding-bottom: 5px;
    font-size: 28px;
    font-weight: 600;
    color: #4a90e8;
}
.i-plus {
    width: 22px;
    height: 22px;
    margin-right: 14px;
}
.set-var {
    height: 34px;
    margin-top: 27px;
    display: flex;
    align-items: center;
    padding-left: 11px;
    padding-bottom: 5px;
    font-size: 28px;
    font-weight: 600;
    color: #4a90e8;
}
.i-pencil {
    width: 26px;
    height: 28px;
    margin-right: 10px;
}
.right-rail {
    flex: 1;
    display: flex;
    flex-direction: column;
    align-items: center;
    padding-top: 16px;
    padding-left: 2px;
    gap: 26px;
}
.rail-active {
    width: 56px;
    height: 56px;
    background-color: #2e3a44;
    border-radius: 8px;
    display: flex;
    align-items: center;
    justify-content: center;
}
.rail-r-i {
    width: 34px;
    height: 36px;
}
.rail-scope {
    margin-top: 9px;
}
```
